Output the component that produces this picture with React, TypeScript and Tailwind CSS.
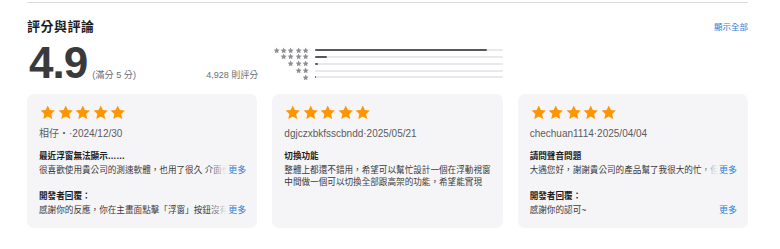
import React from "react";

const STAR = "M12 2l2.94 6.26 6.86.74-5.13 4.64 1.45 6.76L12 17.02l-6.12 3.38 1.45-6.76L2.2 9l6.86-.74z";

function Star({ className }: { className: string }) {
  return (
    <svg viewBox="0 0 24 24" className={className}>
      <path d={STAR} fill="currentColor" />
    </svg>
  );
}

const histogram = [
  { stars: 5, pct: 91.5 },
  { stars: 4, pct: 6 },
  { stars: 3, pct: 1.6 },
  { stars: 2, pct: 0 },
  { stars: 1, pct: 0.6 },
];

function Clipped({ text }: { text: string }) {
  return (
    <div className="flex leading-[12px] h-[12px]">
      <div className="relative flex-1 min-w-0 overflow-hidden whitespace-nowrap">
        {text}
        <span className="absolute right-0 top-0 h-[12px] w-[18px] bg-linear-to-r from-[#f5f5f7]/0 to-[#f5f5f7]" />
      </div>
      <span className="shrink-0 pl-[1px] text-[9px] text-[#2f80d8]">更多</span>
    </div>
  );
}

type Review = {
  author: string;
  title: string;
  body: string[];
  clipBody?: boolean;
  reply?: string;
  clipReply?: boolean;
};

const reviews: Review[] = [
  {
    author: "相仔‧·2024/12/30",
    title: "最近浮窗無法顯示……",
    body: ["很喜歡使用貴公司的測速軟體，也用了很久 介面也很簡潔好用"],
    clipBody: true,
    reply: "感謝你的反應，你在主畫面點擊「浮窗」按鈕沒有開啟嗎",
    clipReply: true,
  },
  {
    author: "dgjczxbkfsscbndd·2025/05/21",
    title: "切換功能",
    body: ["整體上都還不錯用，希望可以幫忙設計一個在浮動視窗", "中間做一個可以切換全部跟高架的功能，希望能實現"],
  },
  {
    author: "chechuan1114·2025/04/04",
    title: "請問聲音問題",
    body: ["大遇您好，謝謝貴公司的產品幫了我很大的忙，但想請問"],
    clipBody: true,
    reply: "感謝你的認可~",
  },
];

function ReviewCard({ r }: { r: Review }) {
  return (
    <div className="h-[134px] rounded-[7px] bg-[#f5f5f7] pl-[12px] pr-[11px] pt-[10px]">
      <div className="flex text-[#ff9500]">
        {[0, 1, 2, 3, 4].map((i) => (
          <Star key={i} className="w-[17.5px] h-[17.5px]" />
        ))}
      </div>
      <div className="mt-[5.5px] h-[13px] leading-[13px] text-[10px] text-[#5c5c60]">{r.author}</div>
      <div className="mt-[9px] h-[14px] leading-[14px] text-[8.6px] font-semibold text-[#1d1d1f]">{r.title}</div>
      <div className="mt-[1px] text-[8.6px] text-[#3a3a3c]">
        {r.clipBody ? (
          <Clipped text={r.body[0]} />
        ) : (
          r.body.map((line) => (
            <div key={line} className="leading-[12px] whitespace-nowrap">
              {line}
            </div>
          ))
        )}
      </div>
      {r.reply && (
        <>
          <div className="mt-[13px] h-[14px] leading-[14px] text-[8.6px] font-semibold text-[#1d1d1f]">開發者回覆：</div>
          <div className="mt-[1px] text-[8.6px] text-[#3a3a3c]">
            {r.clipReply ? (
              <Clipped text={r.reply} />
            ) : (
              <div className="flex justify-between leading-[12px]">
                <span>{r.reply}</span>
                <span className="text-[9px] text-[#2f80d8]">更多</span>
              </div>
            )}
          </div>
        </>
      )}
    </div>
  );
}

export default function App() {
  return (
    <div className="w-[780px] h-[249px] bg-white px-[27px] pt-[2px] overflow-hidden font-[family-name:'Liberation_Sans','Noto_Sans_CJK_TC',sans-serif]">
      <div className="border-t border-[#dcdce0] w-[721px]" />

      {/* header */}
      <div className="mt-[16px] h-[16px] w-[721px] flex items-center justify-between">
        <h2 className="text-[13px] font-bold text-[#1d1d1f] tracking-[0.5px]">評分與評論</h2>
        <span className="text-[8.5px] text-[#2f80d8]">顯示全部</span>
      </div>

      {/* summary */}
      <div className="mt-[8px] w-[721px] grid grid-cols-3 gap-[15px]">
        <div className="flex items-baseline justify-between h-[40px]">
          <div className="flex items-baseline">
            <span className="ml-[2px] text-[44px] leading-[40px] font-bold text-[#3a3a3c] tracking-[-1px]">4.9</span>
            <span className="ml-[5px] text-[9.2px] text-[#6e6e73]">(滿分 5 分)</span>
          </div>
          <span className="text-[9px] text-[#6e6e73] mr-[-1px]">4,928 則評分</span>
        </div>
        <div className="pt-[4px]">
          {histogram.map((h) => (
            <div key={h.stars} className="flex items-center h-[6.75px]">
              <div className="w-[37px] flex justify-end text-[#8e8e93]">
                {Array.from({ length: h.stars }).map((_, i) => (
                  <Star key={i} className="w-[7.3px] h-[7.3px]" />
                ))}
              </div>
              <div className="ml-[6px] flex-1 h-[2px] bg-[#e8e8ed] rounded-full">
                <div className="h-[2px] bg-[#58585c] rounded-full" style={{ width: `${h.pct}%` }} />
              </div>
            </div>
          ))}
        </div>
        <div />
      </div>

      {/* reviews */}
      <div className="mt-[11px] w-[721px] grid grid-cols-3 gap-[15px]">
        {reviews.map((r) => (
          <ReviewCard key={r.author} r={r} />
        ))}
      </div>
    </div>
  );
}
